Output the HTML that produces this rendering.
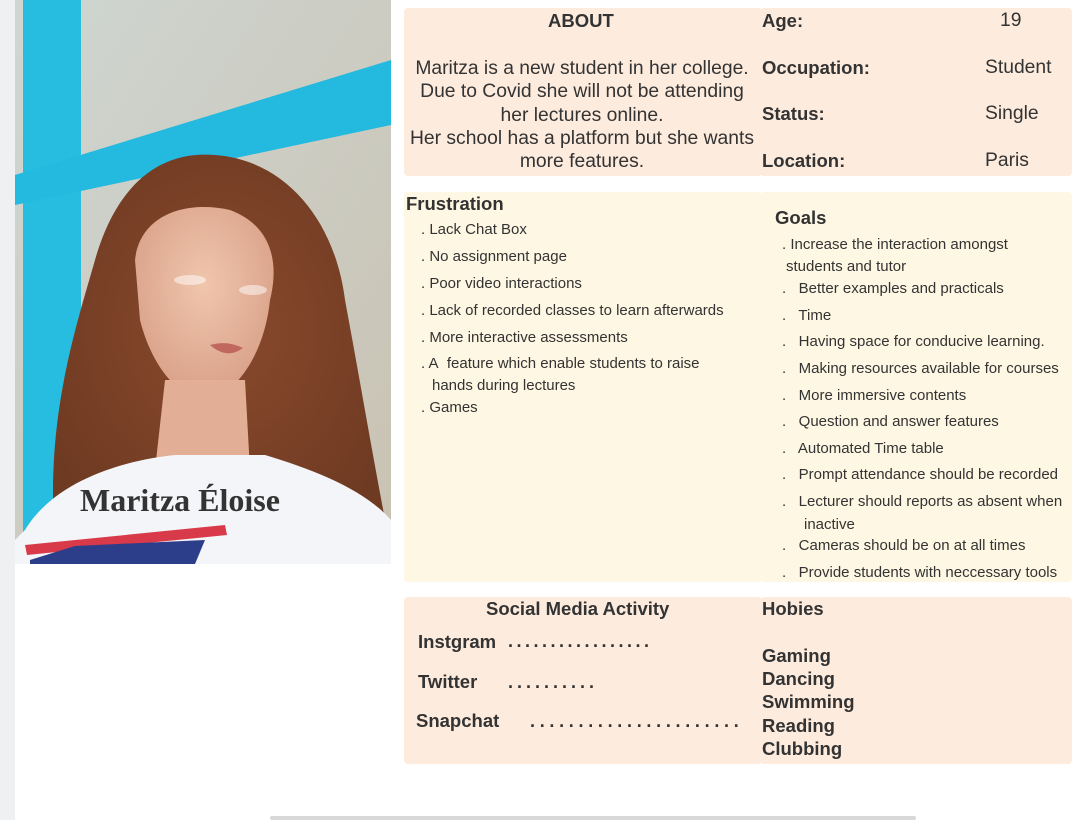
<!DOCTYPE html>
<html><head><meta charset="utf-8"><style>
*{margin:0;padding:0;box-sizing:border-box}
body{width:1080px;height:820px;background:#fff;position:relative;overflow:hidden;font-family:"Liberation Sans",sans-serif;color:#333}
.a{position:absolute;white-space:nowrap}
.box{position:absolute;border-radius:4px}
.pe{background:#fdebdd}
.cr{background:#fef7e3}
.l{font-size:15px;color:#333}
.h{font-size:18.5px;font-weight:bold;color:#333}
.t{font-size:19.3px;color:#333}
.d{font-size:18px;font-weight:bold;color:#333}
</style></head><body>
<div style="position:absolute;left:0;top:0;width:15px;height:820px;background:#eff0f2"></div>
<svg class="a" style="left:15px;top:0" width="376" height="564" viewBox="0 0 376 564">
<defs>
<linearGradient id="w" x1="0" y1="0" x2="1" y2="1"><stop offset="0" stop-color="#cfd6d2"/><stop offset="1" stop-color="#c9c2b2"/></linearGradient>
<radialGradient id="hair" cx=".5" cy=".45" r=".6"><stop offset="0" stop-color="#8a4a2c"/><stop offset="1" stop-color="#6e3a22"/></radialGradient>
<radialGradient id="sk" cx=".5" cy=".4" r=".6"><stop offset="0" stop-color="#f0c6ad"/><stop offset="1" stop-color="#d9a088"/></radialGradient>
</defs>
<rect width="376" height="564" fill="url(#w)"/>
<rect x="8" y="0" width="58" height="564" fill="#27bde0"/>
<polygon points="0,175 376,60 376,125 0,205" fill="#24b9de"/>
<path d="M40,540 C30,420 60,330 80,260 C100,190 140,150 200,155 C270,160 320,220 330,300 C345,380 360,470 375,545 L300,520 L100,500 Z" fill="url(#hair)"/>
<path d="M120,260 C125,215 170,200 215,210 C255,225 265,260 255,300 C250,350 225,390 195,400 C160,400 135,360 125,320 Z" fill="url(#sk)"/>
<path d="M150,380 L230,380 L235,470 L140,470 Z" fill="#e2ae95"/>
<path d="M10,530 C40,480 110,460 160,455 L250,455 C300,470 350,490 376,520 L376,564 L0,564 L0,540 Z" fill="#f4f5f8"/>
<path d="M10,545 L210,525 L212,535 L12,555 Z" fill="#d83a4a"/>
<path d="M15,560 L60,546 L190,540 L180,564 L15,564 Z" fill="#2c3d8a"/>
<ellipse cx="175" cy="280" rx="16" ry="5" fill="#fff" opacity=".5"/>
<ellipse cx="238" cy="290" rx="14" ry="5" fill="#fff" opacity=".5"/>
<path d="M195,345 Q212,340 228,348 Q212,360 195,345Z" fill="#c0685e"/>
</svg>
<div class="a" style="left:80px;top:482px;font-family:'Liberation Serif',serif;font-weight:bold;font-size:32px;color:#333">Maritza Éloise</div>

<div class="box pe" style="left:404px;top:8px;width:358px;height:168px"></div>
<div class="box pe" style="left:760px;top:8px;width:312px;height:168px"></div>
<div class="box cr" style="left:404px;top:192px;width:358px;height:390px"></div>
<div class="box cr" style="left:760px;top:192px;width:312px;height:390px"></div>
<div class="box pe" style="left:404px;top:597px;width:358px;height:167px"></div>
<div class="box pe" style="left:760px;top:597px;width:312px;height:167px"></div>

<div class="a h" style="left:548px;top:10px">ABOUT</div>
<div class="a t" style="left:404px;width:356px;top:57px;text-align:center;line-height:23.3px">Maritza is a new student in her college.<br>Due to Covid she will not be attending<br>her lectures online.<br>Her school has a platform but she wants<br>more features.</div>
<div class="a h" style="left:762px;top:10px">Age:</div><div class="a t" style="left:1000px;top:10px">19</div>
<div class="a h" style="left:762px;top:57px">Occupation:</div><div class="a t" style="left:985px;top:57px">Student</div>
<div class="a h" style="left:762px;top:103px">Status:</div><div class="a t" style="left:985px;top:103px">Single</div>
<div class="a h" style="left:762px;top:150px">Location:</div><div class="a t" style="left:985px;top:150px">Paris</div>

<div class="a h" style="left:406px;top:193px">Frustration</div>
<div class="a l" style="left:421px;top:221px">. Lack Chat Box</div>
<div class="a l" style="left:421px;top:248px">. No assignment page</div>
<div class="a l" style="left:421px;top:275px">. Poor video interactions</div>
<div class="a l" style="left:421px;top:302px">. Lack of recorded classes to learn afterwards</div>
<div class="a l" style="left:421px;top:329px">. More interactive assessments</div>
<div class="a l" style="left:421px;top:355px">. A&nbsp; feature which enable students to raise</div>
<div class="a l" style="left:432px;top:377px">hands during lectures</div>
<div class="a l" style="left:421px;top:399px">. Games</div>

<div class="a h" style="left:775px;top:207px">Goals</div>
<div class="a l" style="left:782px;top:236px">. Increase the interaction amongst</div>
<div class="a l" style="left:786px;top:258px">students and tutor</div>
<div class="a l" style="left:782px;top:280px">.&nbsp;&nbsp; Better examples and practicals</div>
<div class="a l" style="left:782px;top:307px">.&nbsp;&nbsp; Time</div>
<div class="a l" style="left:782px;top:333px">.&nbsp;&nbsp; Having space for conducive learning.</div>
<div class="a l" style="left:782px;top:360px">.&nbsp;&nbsp; Making resources available for courses</div>
<div class="a l" style="left:782px;top:387px">.&nbsp;&nbsp; More immersive contents</div>
<div class="a l" style="left:782px;top:413px">.&nbsp;&nbsp; Question and answer features</div>
<div class="a l" style="left:782px;top:440px">.&nbsp;&nbsp; Automated Time table</div>
<div class="a l" style="left:782px;top:466px">.&nbsp;&nbsp; Prompt attendance should be recorded</div>
<div class="a l" style="left:782px;top:493px">.&nbsp;&nbsp; Lecturer should reports as absent when</div>
<div class="a l" style="left:804px;top:516px">inactive</div>
<div class="a l" style="left:782px;top:537px">.&nbsp;&nbsp; Cameras should be on at all times</div>
<div class="a l" style="left:782px;top:564px">.&nbsp;&nbsp; Provide students with neccessary tools</div>

<div class="a h" style="left:486px;top:598px">Social Media Activity</div>
<div class="a h" style="left:418px;top:631px">Instgram</div><div class="a d" style="left:508px;top:631px;letter-spacing:3.5px">.................</div>
<div class="a h" style="left:418px;top:671px">Twitter</div><div class="a d" style="left:508px;top:672px;letter-spacing:4px">..........</div>
<div class="a h" style="left:416px;top:710px">Snapchat</div><div class="a d" style="left:530px;top:711px;letter-spacing:4.7px">......................</div>
<div class="a h" style="left:762px;top:598px">Hobies</div>
<div class="a h" style="left:762px;top:644px;line-height:23.2px">Gaming<br>Dancing<br>Swimming<br>Reading<br>Clubbing</div>
<div style="position:absolute;left:270px;top:816px;width:646px;height:4px;background:#d8d8d8;border-radius:2px"></div>
</body></html>
